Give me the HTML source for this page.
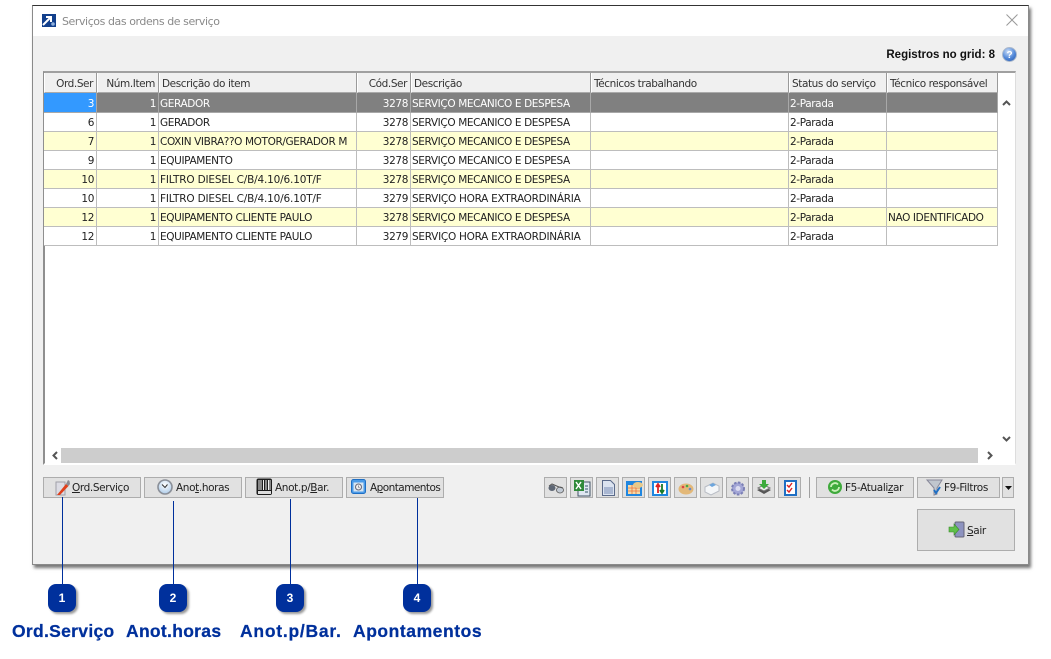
<!DOCTYPE html>
<html lang="pt"><head><meta charset="utf-8"><title>Serviços das ordens de serviço</title>
<style>
html,body{margin:0;padding:0;background:#fff;width:1051px;height:659px;overflow:hidden}
body{font-family:"DejaVu Sans","Liberation Sans",sans-serif;font-size:10.5px;color:#222;position:relative}
.a{position:absolute}
#win{left:32px;top:5px;width:995px;height:558px;background:#f0f0f0;border:1px solid #8a8a8a;border-top-color:#333;box-shadow:2px 3px 3px #777}
#tb{left:33px;top:6px;width:995px;height:30px;background:#fff}
table{border-collapse:separate;border-spacing:0;table-layout:fixed;position:absolute;left:44px;top:73px;width:954px}
td,th{padding:3px 2px 0 1px;height:15px;line-height:14px;vertical-align:top;font-weight:normal;white-space:nowrap;overflow:hidden;border-right:1px solid #bdbdbd;border-bottom:1px solid #bdbdbd;text-align:left;letter-spacing:-.38px}
th{height:15px;line-height:15px;background:#f0f0f0;border-right:1px solid #9a9a9a;border-left:1px solid #fff;border-bottom:1px solid #aaa;padding:4px 3px 0 2px;color:#333;letter-spacing:-.42px}
.r{text-align:right}
th.r{padding-right:3px}
.y td{background:#ffffd2}
.w td{background:#fff}
.s td{background:#808080;color:#fff;border-color:#a8a8a8;padding-top:4px}
.s td:first-child{background:#3399ff}
.wd{letter-spacing:-.18px}
.wh{letter-spacing:-.28px}
.btn{position:absolute;box-sizing:border-box;background:#e1e1e1;border:1px solid #adadad;height:21px;line-height:19px;font-size:10.5px;color:#222;letter-spacing:-.38px;white-space:nowrap}
.btn u{text-underline-offset:1px}
.btn svg{position:absolute}
.btn span{position:absolute;top:.5px}
.ic{position:absolute;top:477px;width:23px;height:21px;box-sizing:border-box;background:#e1e1e1;border:1px solid #adadad}
.ic svg{position:absolute;left:2px;top:1px}
.ln{position:absolute;width:1px;background:#00309c}
.bd{position:absolute;top:584px;width:28px;height:28px;border-radius:8px;background:#00309c;color:#fff;font:bold 12px/28px "Liberation Sans",sans-serif;text-align:center;box-shadow:2px 2px 2px #999}
.lb{position:absolute;top:620px;color:#00309c;font:bold 17.5px/22px "Liberation Sans",sans-serif;white-space:nowrap;letter-spacing:.3px;-webkit-text-stroke:.25px #00309c}
</style></head><body>
<div id="win" class="a"></div>
<div id="tb" class="a"></div>
<svg class="a" style="left:42px;top:14px" width="14" height="13" viewBox="0 0 14 13"><rect width="14" height="13" fill="#123f8c"/><path d="M1 11L8 4M4 3h5v5" stroke="#fff" stroke-width="2" fill="none"/><circle cx="11" cy="10" r="1.800" fill="#8fb0dc"/></svg>
<div class="a" style="left:62px;top:14px;font-size:11px;line-height:15px;color:#8a8a8a;letter-spacing:-.43px;white-space:nowrap">Serviços das ordens de serviço</div>
<svg class="a" style="left:1006px;top:14px" width="12" height="12"><path d="M.5.5l11 11M11.500.5l-11 11" stroke="#9a9a9a" fill="none"/></svg>
<div class="a" style="right:56px;top:48px;font:bold 11.500px/14px 'Liberation Sans',sans-serif;color:#111;white-space:nowrap">Registros no grid: 8</div>
<svg class="a" style="left:1002px;top:47px" width="15" height="15"><defs><radialGradient id="q" cx=".4" cy=".3" r=".8"><stop offset="0" stop-color="#cfe0f8"/><stop offset=".6" stop-color="#4f86d8"/><stop offset="1" stop-color="#2f5fb0"/></radialGradient></defs><circle cx="7.500" cy="7.500" r="7" fill="url(#q)" stroke="#aab8cc"/><text x="7.500" y="11" font-size="10" font-weight="bold" text-anchor="middle" fill="#fff" font-family="Liberation Sans">?</text></svg>

<!-- grid -->
<div class="a" style="left:43px;top:71px;width:973px;height:394px;background:#fff;box-sizing:border-box;border-top:2px solid #a0a0a0;border-left:2px solid #8f8f8f;border-right:1px solid #ddd;border-bottom:2px solid #fff"></div>
<table>
<colgroup><col style="width:53px"><col style="width:62px"><col style="width:198px"><col style="width:54px"><col style="width:180px"><col style="width:198px"><col style="width:98px"><col style="width:111px"></colgroup>
<tr><th class="r">Ord.Ser</th><th class="r">Núm.Item</th><th>Descrição do item</th><th class="r">Cód.Ser</th><th>Descrição</th><th>Técnicos trabalhando</th><th>Status do serviço</th><th>Técnico responsável</th></tr>
<tr class="s"><td class="r">3</td><td class="r">1</td><td>GERADOR</td><td class="r">3278</td><td>SERVIÇO MECANICO E DESPESA</td><td></td><td>2-Parada</td><td></td></tr>
<tr class="w"><td class="r">6</td><td class="r">1</td><td>GERADOR</td><td class="r">3278</td><td>SERVIÇO MECANICO E DESPESA</td><td></td><td>2-Parada</td><td></td></tr>
<tr class="y"><td class="r">7</td><td class="r">1</td><td>COXIN VIBRA??O MOTOR/GERADOR M</td><td class="r">3278</td><td>SERVIÇO MECANICO E DESPESA</td><td></td><td>2-Parada</td><td></td></tr>
<tr class="w"><td class="r">9</td><td class="r">1</td><td>EQUIPAMENTO</td><td class="r">3278</td><td>SERVIÇO MECANICO E DESPESA</td><td></td><td>2-Parada</td><td></td></tr>
<tr class="y"><td class="r">10</td><td class="r">1</td><td class="wd">FILTRO DIESEL C/B/4.10/6.10T/F</td><td class="r">3278</td><td>SERVIÇO MECANICO E DESPESA</td><td></td><td>2-Parada</td><td></td></tr>
<tr class="w"><td class="r">10</td><td class="r">1</td><td class="wd">FILTRO DIESEL C/B/4.10/6.10T/F</td><td class="r">3279</td><td class="wh">SERVIÇO HORA EXTRAORDINÁRIA</td><td></td><td>2-Parada</td><td></td></tr>
<tr class="y"><td class="r">12</td><td class="r">1</td><td>EQUIPAMENTO CLIENTE PAULO</td><td class="r">3278</td><td>SERVIÇO MECANICO E DESPESA</td><td></td><td>2-Parada</td><td>NAO IDENTIFICADO</td></tr>
<tr class="w"><td class="r">12</td><td class="r">1</td><td>EQUIPAMENTO CLIENTE PAULO</td><td class="r">3279</td><td class="wh">SERVIÇO HORA EXTRAORDINÁRIA</td><td></td><td>2-Parada</td><td></td></tr>
</table>
<!-- scrollbars -->
<div class="a" style="left:61px;top:448px;width:917px;height:15px;background:#cdcdcd"></div>
<svg class="a" style="left:51px;top:451px" width="9" height="9"><path d="M6 1L2.500 4.500 6 8" stroke="#555" stroke-width="2" fill="none"/></svg>
<svg class="a" style="left:985px;top:451px" width="9" height="9"><path d="M3 1l3.500 3.500L3 8" stroke="#555" stroke-width="2" fill="none"/></svg>
<svg class="a" style="left:1002px;top:99px" width="9" height="9"><path d="M1 6l3.500-3.500L8 6" stroke="#555" stroke-width="2" fill="none"/></svg>
<svg class="a" style="left:1002px;top:434px" width="9" height="9"><path d="M1 3l3.500 3.500L8 3" stroke="#555" stroke-width="2" fill="none"/></svg>

<!-- left buttons -->
<div class="btn" style="left:43px;top:477px;width:98px"><svg style="left:11px;top:1px" width="16" height="17"><path d="M1 3h9v13H1z" fill="#dcdce4" stroke="#a0a0a8"/><path d="M2 16L11 5l2.500 2L5 16z" fill="#e0401c"/><path d="M11 5l2-4 1.500 1 .5 3-1.500 2z" fill="#8a8a92"/></svg><span style="left:28px"><u>O</u>rd.Serviço</span></div>
<div class="btn" style="left:144px;top:477px;width:98px"><svg style="left:12px;top:1px" width="17" height="17"><defs><radialGradient id="c" cx=".5" cy=".35" r=".7"><stop offset="0" stop-color="#fff"/><stop offset="1" stop-color="#a8c8e8"/></radialGradient></defs><circle cx="8" cy="8" r="7" fill="url(#c)" stroke="#8a8f98" stroke-width="1.600"/><path d="M5 5.500L8 8.500l2.500-3" stroke="#333" fill="none"/></svg><span style="left:31px">Ano<u>t</u>.horas</span></div>
<div class="btn" style="left:245px;top:477px;width:98px"><svg style="left:10px;top:0" width="17" height="18"><rect x=".5" y=".5" width="15.500" height="16.500" rx="2" fill="#1c1c1c"/><path d="M3 2v10M5 2v10M7.500 2v10M10 2v10M12.500 2v10M14 2v10" stroke="#f0f0f0" stroke-width="1"/><rect x="2" y="13" width="13" height="3" fill="#ddd"/></svg><span style="left:29px">Anot.p/<u>B</u>ar.</span></div>
<div class="btn" style="left:346px;top:477px;width:98px"><svg style="left:4px;top:1px" width="16" height="16"><rect x=".5" y=".5" width="14" height="14" rx="2" fill="#4b9be8" stroke="#1f6fc4"/><rect x="2.500" y="3.500" width="10" height="9" fill="#d8e6f2"/><circle cx="7.500" cy="8" r="3" fill="#eee" stroke="#667"/><path d="M7.500 6.500V8l1 1" stroke="#667" fill="none" stroke-width=".7"/></svg><span style="left:23px;letter-spacing:-.55px">A<u>p</u>ontamentos</span></div>

<!-- icon toolbar -->
<div class="ic" style="left:544px"><svg width="18" height="18"><ellipse cx="5" cy="9" rx="3.500" ry="3" fill="#5d6674"/><ellipse cx="13" cy="11" rx="3.500" ry="3" fill="#c2cad4" stroke="#555" stroke-width=".8"/><path d="M2 7l3-2 7 3 4 1" stroke="#555" fill="none"/></svg></div>
<div class="ic" style="left:570px"><svg width="18" height="18"><rect x="5" y="3" width="12" height="14" fill="#dfe7f1" stroke="#456"/><rect x="1" y="1" width="10" height="11" fill="#2f8a3a"/><path d="M3 3l5 7M8 3l-5 7" stroke="#fff" stroke-width="1.500"/><path d="M12 7h3M12 10h3M12 13h3" stroke="#356"/></svg></div>
<div class="ic" style="left:596px"><svg width="18" height="18"><path d="M3.500 1.500h8l4 4v11h-12z" fill="#dbe3f0" stroke="#5a6a8a"/><path d="M5 8h9v7H5z" fill="#a9b7d2"/></svg></div>
<div class="ic" style="left:622px"><svg width="18" height="18"><rect x="1" y="2" width="16" height="15" fill="#1f86e0"/><rect x="3" y="6" width="12" height="9" fill="#f4d9a8"/><path d="M3 9h12M3 12h12M7 6v9M11 6v9" stroke="#e8743c" stroke-width=".8"/><ellipse cx="13" cy="6" rx="5" ry="3" fill="#e8c98a"/></svg></div>
<div class="ic" style="left:648px"><svg width="18" height="18"><rect x="1" y="2" width="16" height="15" fill="#1f86e0"/><rect x="3" y="4" width="12" height="11" fill="#fff"/><path d="M7 14V6M5 8l2-3 2 3" stroke="#d22" stroke-width="1.800" fill="none"/><path d="M11 5v8M9 11l2 3 2-3" stroke="#187a2a" stroke-width="1.800" fill="none"/></svg></div>
<div class="ic" style="left:674px"><svg width="18" height="18"><ellipse cx="9" cy="10" rx="7.500" ry="5.500" fill="#e3b878"/><circle cx="6" cy="8" r="1.300" fill="#d44"/><circle cx="10" cy="7" r="1.300" fill="#4a4"/><circle cx="13" cy="10" r="1.300" fill="#68c"/></svg></div>
<div class="ic" style="left:700px"><svg width="18" height="18"><path d="M2 8l8-4 6 3v5l-8 4-6-3z" fill="#f4f6f8" stroke="#b8bcc4"/><path d="M6 6l4-2 3 2-4 2z" fill="#6ea6dd"/></svg></div>
<div class="ic" style="left:726px"><svg width="18" height="18"><circle cx="9" cy="9.500" r="6" fill="#a3a6d6" stroke="#7b7fb5" stroke-width="2" stroke-dasharray="2.500 1.500"/><circle cx="9" cy="9.500" r="2.500" fill="#dcdcf0"/></svg></div>
<div class="ic" style="left:752px"><svg width="18" height="18"><path d="M2 11l7-3 7 3-7 4z" fill="#555"/><path d="M3 9l6-3 6 3-6 3z" fill="#eee" stroke="#777"/><path d="M7 1h4v4h3l-5 5-5-5h3z" fill="#3caa3c"/></svg></div>
<div class="ic" style="left:778px"><svg width="18" height="18"><rect x="3" y="1" width="13" height="16" fill="#1f6fc4"/><rect x="5" y="3" width="9" height="12" fill="#fff"/><path d="M6 6l2 2 3-4M6 11l2 2 3-4" stroke="#d22" stroke-width="1.400" fill="none"/></svg></div>
<div class="a" style="left:809px;top:477px;width:1px;height:21px;background:#a0a0a0"></div>

<!-- right buttons -->
<div class="btn" style="left:816px;top:477px;width:98px"><svg style="left:10px;top:1px" width="16" height="16"><circle cx="8" cy="8" r="7" fill="#3faa3c"/><path d="M4 8a4 4 0 0 1 7-2.500M12 8a4 4 0 0 1-7 2.500" stroke="#c8f0b8" stroke-width="1.800" fill="none"/></svg><span style="left:28px">F5-Atuali<u>z</u>ar</span></div>
<div class="btn" style="left:917px;top:477px;width:83px"><svg style="left:8px;top:0" width="18" height="18"><path d="M1 2h15L11 10v6l-3 1V10z" fill="#c0c6ce" stroke="#889"/><path d="M8 12l2 3 4-6" stroke="#1f6fc4" stroke-width="2" fill="none"/></svg><span style="left:26px">F9-Filtros</span></div>
<div class="btn" style="left:1002px;top:477px;width:12px"><svg style="left:2px;top:8px" width="7" height="4"><path d="M0 0h7L3.500 4z" fill="#111"/></svg></div>
<div class="btn" style="left:917px;top:509px;width:98px;height:42px;line-height:40px"><svg style="left:30px;top:11px" width="18" height="18"><rect x="7" y="1" width="9" height="15" rx="1" fill="#8d93c0" stroke="#667"/><path d="M1 6h5V3l5 5.500L6 14v-3H1z" fill="#5fc04a" stroke="#3a8a2a" stroke-width=".6"/></svg><span style="left:49px"><u>S</u>air</span></div>

<!-- callouts -->
<div class="ln" style="left:62px;top:497px;height:88px"></div>
<div class="ln" style="left:173px;top:501px;height:84px"></div>
<div class="ln" style="left:290px;top:499px;height:86px"></div>
<div class="ln" style="left:417px;top:498px;height:87px"></div>
<div class="bd" style="left:48px">1</div>
<div class="bd" style="left:159px">2</div>
<div class="bd" style="left:276px">3</div>
<div class="bd" style="left:403px">4</div>
<div class="lb" style="left:12px">Ord.Serviço</div>
<div class="lb" style="left:126px">Anot.horas</div>
<div class="lb" style="left:240px;letter-spacing:.75px">Anot.p/Bar.</div>
<div class="lb" style="left:353px;letter-spacing:.55px">Apontamentos</div>
</body></html>
